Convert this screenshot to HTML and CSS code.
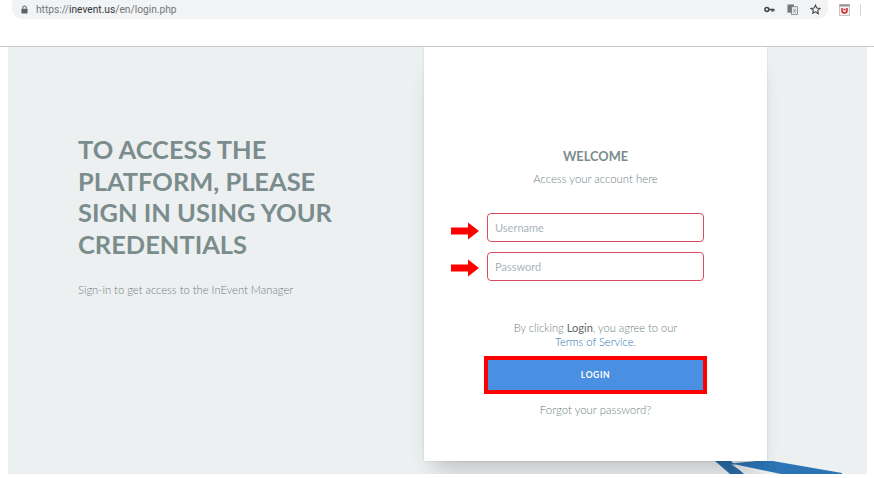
FILE: index.html
```html
<!DOCTYPE html>
<html lang="en">
<head>
<meta charset="utf-8">
<title>InEvent Login</title>
<link rel="stylesheet" href="styles.css">
</head>
<body>
<header class="toolbar">
  <div class="omnibox">
    <svg class="lock" width="7" height="9" viewBox="0 0 8 10"><path d="M2 4V3a2 2 0 0 1 4 0v1" fill="none" stroke="#5f6368" stroke-width="1.2"/><rect x="0.5" y="4" width="7" height="5.5" rx="0.8" fill="#5f6368"/></svg>
    <span class="url">https://<b>inevent.us</b>/en/login.php</span>
    <span class="omni-icons">
      <svg width="11" height="7" viewBox="0 0 12 8"><circle cx="3" cy="4" r="2.2" fill="none" stroke="#444" stroke-width="1.8"/><path d="M5 4h6.500M9 4v2.500M11 4v2" fill="none" stroke="#444" stroke-width="1.600"/></svg>
      <svg width="11" height="11" viewBox="0 0 12 12"><rect x="0.5" y="0.5" width="7" height="9" fill="#777"/><rect x="5" y="3" width="6.5" height="8.5" fill="#e8eaed" stroke="#777" stroke-width="0.8"/><path d="M7 5.500l2.500 4M9.500 5.500l-2.500 4" stroke="#777" stroke-width="0.7"/></svg>
      <svg width="11" height="11" viewBox="0 0 24 24"><path d="M12 2.500l2.900 6.400 7 .8-5.200 4.700 1.400 6.900L12 17l-6.100 3.300 1.400-6.900L2.100 9.700l7-.8z" fill="none" stroke="#444" stroke-width="2.400"/></svg>
    </span>
  </div>
  <svg class="extension" width="11" height="12" viewBox="0 0 11 12"><rect x="0.5" y="0.500" width="10" height="11" fill="#f4f2f0" stroke="#c9c5c5"/><rect x="0.500" y="0.500" width="10" height="2" fill="#9a8f8f"/><path d="M3 4v2.500a2.500 2.500 0 0 0 5 0V4M4.500 5.500h2" fill="none" stroke="#d3232a" stroke-width="1.500"/></svg>
  <span class="toolbar-sep"></span>
</header>
<main class="stage">
  <section class="intro">
    <h1>TO ACCESS THE PLATFORM, PLEASE SIGN IN USING YOUR CREDENTIALS</h1>
    <p>Sign-in to get access to the InEvent Manager</p>
  </section>
  <section class="card">
    <h2>WELCOME</h2>
    <p class="sub">Access your account here</p>
    <form class="form">
      <div class="row row-user">
        <svg class="arrow" width="28" height="18" viewBox="0 0 28 18"><path d="M0 5.500h17V0.500L28 9 17 17.500V12.500H0z" fill="#fe0000"/></svg>
        <input class="field" type="text" placeholder="Username">
      </div>
      <div class="row row-pass">
        <svg class="arrow" width="28" height="18" viewBox="0 0 28 18"><path d="M0 5.500h17V0.500L28 9 17 17.500V12.500H0z" fill="#fe0000"/></svg>
        <input class="field" type="password" placeholder="Password">
      </div>
    </form>
    <p class="terms">By clicking <b>Login</b>, you agree to our<br><a href="#">Terms of Service</a>.</p>
    <button class="login" type="button">LOGIN</button>
    <a class="forgot" href="#">Forgot your password?</a>
  </section>
  <svg class="deco" width="160" height="13" viewBox="0 0 160 13"><path d="M0 0h16l13 13H15z" fill="#2a6ca6"/><path d="M16 2.500L52 -1 127 12 127 13H66z" fill="#2b74b5"/><path d="M16 3l14 10h20z" fill="#e8ebec"/></svg>
</main>
</body>
</html>
```

FILE: styles.css
```css
* { box-sizing: border-box; }
html, body { margin: 0; padding: 0; background: #fff; }
body { width: 874px; height: 478px; overflow: hidden; font-family: "Lato", sans-serif; }

.toolbar { height: 47px; border-bottom: 1px solid #c9cbcb; display: flex; align-items: flex-start; padding-left: 12px; }
.omnibox { width: 816px; height: 19px; background: #f1f3f4; border-radius: 0 0 10px 10px; display: flex; align-items: center; padding: 0 7px 0 9px; }
.lock { margin-right: 8px; }
.url { font: 10.2px "Roboto", sans-serif; color: #72777b; }
.url b { font-weight: 400; color: #33363a; }
.omni-icons { margin-left: auto; display: flex; align-items: center; gap: 12px; }
.extension { margin: 4px 0 0 11px; }
.toolbar-sep { width: 1px; height: 12px; margin: 4px 0 0 10px; background: #d5d5d5; }

.stage { position: relative; width: 859px; height: 427px; margin-left: 8px; background: #ecf0f1; display: flex; align-items: flex-start; overflow: hidden; }
.intro { width: 416px; padding: 87px 0 0 70px; }
.intro h1 { margin: 0; width: 270px; font-size: 25.45px; line-height: 31.500px; font-weight: 700; color: #7b8c8d; }
.intro p { margin: 22px 0 0; font-size: 11.2px; line-height: 16px; font-weight: 300; color: #6f7f80; }

.card { position: relative; z-index: 1; width: 343px; height: 414px; background: #fff; box-shadow: 0 18px 22px -10px rgba(0,0,0,.2), 0 0 2px rgba(0,0,0,.12); display: flex; flex-direction: column; align-items: center; padding-top: 101px; }
.card h2 { margin: 0; font-size: 12.8px; line-height: 17px; font-weight: 700; color: #7b8c8d; }
.sub { margin: 6px 0 0; font-size: 11.35px; line-height: 16px; font-weight: 300; color: #6f7f80; }
.form { margin-top: 26px; display: flex; flex-direction: column; gap: 10px; }
.row { display: flex; align-items: center; width: 217px; position: relative; }
.arrow { position: absolute; left: -36px; }
.row-user .arrow { top: 9px; }
.row-pass .arrow { top: 7px; }
.field { width: 217px; height: 29px; border: 1px solid #dd4b60; border-radius: 4px; background: #fff; padding: 0 7px; font: 300 11px "Lato", sans-serif; color: #7f8c8d; outline: 0; }
.field::placeholder { color: #aab5b8; opacity: 1; font-weight: 400; }
.terms { margin: 40px 0 0; font-size: 11.1px; line-height: 14px; font-weight: 300; color: #6f7f80; text-align: center; }
.terms b { font-weight: 400; color: #5f6b6c; }
.terms a { color: #2b74b5; text-decoration: none; }
.login { margin-top: 7px; width: 223px; height: 38px; border: 4px solid #fe0000; outline: 0; padding: 0; background: #4a90e2; color: #fff; font: 700 8.500px "Lato", sans-serif; letter-spacing: .6px; }
.forgot { margin-top: 8px; font-size: 11.4px; line-height: 16px; font-weight: 300; color: #6f7f80; text-decoration: none; }

.deco { position: absolute; left: 707px; bottom: 0; }
```
